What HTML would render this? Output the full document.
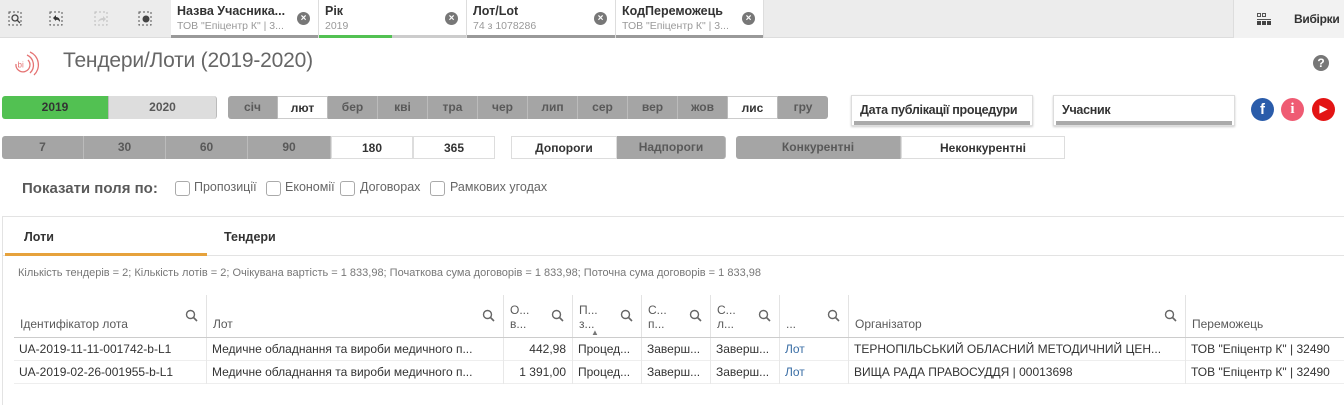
<!DOCTYPE html>
<html><head><meta charset="utf-8"><style>
*{box-sizing:border-box;margin:0;padding:0}
body{width:1344px;height:405px;overflow:hidden;background:#fff;font-family:"Liberation Sans",sans-serif;color:#595959;position:relative}
.a{position:absolute}
.tb{left:0;top:0;width:1344px;height:38px;background:#ececec;border-bottom:1px solid #ddd}
.sel{top:0;height:38px;background:#fff;border-right:1px solid #ddd}
.sel b{position:absolute;left:6px;top:4px;font-size:12.5px;color:#333;white-space:nowrap}
.sel i{position:absolute;left:6px;top:20px;font-size:10.5px;font-style:normal;color:#999;white-space:nowrap}
.sel .x{position:absolute;right:8px;top:12px;width:13px;height:13px;border-radius:50%;background:#777;color:#fff;font-size:10px;line-height:13px;text-align:center;font-weight:bold}
.sel .bar{position:absolute;left:0;right:0;bottom:0;height:3px;background:#999}
.btn{position:absolute;text-align:center;font-size:12px;font-weight:bold;color:#595959;border-right:1px solid #bbb}
.g{background:#a5a5a5}
.w{background:#fff}
.dk{top:96px;height:23px;line-height:23px}
.r2{top:136px;height:23px;line-height:23px}
.dd{top:95px;height:31px;background:#fff;border:1px solid #ddd;font-size:12.5px;font-weight:bold;color:#333;padding:7px 8px;box-shadow:0 1px 2px #ccc;white-space:nowrap;letter-spacing:-0.3px}
.dd::after{content:"";position:absolute;left:2px;right:2px;bottom:0;height:4px;background:#aaa}
.cb{top:181px;width:15px;height:15px;border:1px solid #aaa;border-radius:3px;background:#fff}
.cl{top:180px;font-size:12.5px;color:#666}
.th{position:absolute;top:295px;height:42px;border-right:1px solid #e3e3e3;font-size:12px;color:#595959}
.th span{position:absolute;left:6px;bottom:6px;white-space:nowrap}
.th svg{position:absolute;right:8px;top:14px}
.td{position:absolute;height:23px;line-height:23px;font-size:12px;color:#333;padding-left:5px;border-right:1px solid #e8e8e8;white-space:nowrap;overflow:hidden}
.cir{position:absolute;border-radius:50%;color:#fff;text-align:center;font-weight:bold}
</style></head><body>
<div class="a tb"></div>
<svg class="a" style="left:0;top:0" width="170" height="38">
<g fill="none" stroke="#555" stroke-dasharray="2,2" stroke-width="1">
<rect x="9" y="12" width="12" height="13"/><rect x="50" y="12" width="12" height="13"/><rect x="139" y="12" width="12" height="13"/></g>
<rect x="95" y="12" width="12" height="13" fill="none" stroke="#bbb" stroke-dasharray="2,2"/>
<circle cx="15" cy="18" r="3" fill="none" stroke="#444" stroke-width="1.3"/><line x1="17" y1="20" x2="20" y2="23" stroke="#444" stroke-width="1.3"/>
<path d="M53 18 L56 15 L56 17 Q60 17 60 22 Q58 19 56 20 L56 21Z" fill="#333"/>
<path d="M98 22 Q99 18 103 18 L103 16 L106 19 L103 22 L103 20 Q100 20 98 22Z" fill="#ccc"/>
<circle cx="146" cy="19" r="3.5" fill="#444"/>
</svg>
<div class="a sel" style="left:171px;width:148px"><b>Назва Учасника...</b><i>ТОВ "Епіцентр К" | 3...</i><div class="x">×</div><div class="bar"></div></div>
<div class="a sel" style="left:319px;width:148px"><b>Рік</b><i>2019</i><div class="x">×</div><div class="bar" style="background:#ccc"></div><div class="bar" style="width:73px;background:#52c152"></div></div>
<div class="a sel" style="left:467px;width:149px"><b>Лот/Lot</b><i>74 з 1078286</i><div class="x">×</div><div class="bar"></div></div>
<div class="a sel" style="left:616px;width:148px"><b>КодПереможець</b><i>ТОВ "Епіцентр К" | 3...</i><div class="x">×</div><div class="bar"></div></div>
<div class="a" style="left:1233px;top:0;width:111px;height:38px;background:#f2f2f2;border-left:1px solid #ddd"></div>
<svg class="a" style="left:1256px;top:12px" width="16" height="14"><g fill="none" stroke="#555"><rect x="1.5" y="1.5" width="3" height="3"/><rect x="6.5" y="1.5" width="3" height="3"/></g><rect x="1" y="7" width="14" height="1" fill="#555"/><rect x="1" y="9" width="4" height="4" fill="#444"/><rect x="6" y="9" width="4" height="4" fill="#444"/><rect x="11" y="9" width="4" height="4" fill="#444"/></svg>
<div class="a" style="left:1294px;top:12px;font-size:12px;font-weight:bold;color:#333;letter-spacing:-0.3px">Вибірки</div>

<svg class="a" style="left:8px;top:48px" width="32" height="30"><g fill="none" stroke="#e57373" stroke-width="1.3"><path d="M8 16 A7 7 0 1 0 20 12"/><path d="M19 7 A11 11 0 0 1 22 25"/><path d="M22 4 A14 14 0 0 1 26 27"/></g><text x="9.5" y="19.5" font-size="8" fill="#e57373" font-family="Liberation Sans">bi</text></svg>
<div class="a" style="left:63px;top:49px;font-size:21px;color:#666;letter-spacing:-0.2px">Тендери/Лоти (2019-2020)</div>
<div class="cir" style="left:1313px;top:55px;width:16px;height:16px;background:#777;font-size:12px;line-height:16px">?</div>

<div class="btn dk" style="left:2px;width:107px;background:#52c152;border-radius:3px 0 0 3px;color:#333">2019</div>
<div class="btn dk" style="left:109px;width:108px;background:#ddd;border-radius:0 3px 3px 0">2020</div>
<div class="btn dk g" style="left:228px;width:50px;border-radius:3px 0 0 3px">січ</div>
<div class="btn dk w" style="left:278px;width:50px;color:#333;border-top:1px solid #ccc;border-bottom:1px solid #ccc">лют</div>
<div class="btn dk g" style="left:328px;width:50px">бер</div>
<div class="btn dk g" style="left:378px;width:50px">кві</div>
<div class="btn dk g" style="left:428px;width:50px">тра</div>
<div class="btn dk g" style="left:478px;width:50px">чер</div>
<div class="btn dk g" style="left:528px;width:50px">лип</div>
<div class="btn dk g" style="left:578px;width:50px">сер</div>
<div class="btn dk g" style="left:628px;width:50px">вер</div>
<div class="btn dk g" style="left:678px;width:50px">жов</div>
<div class="btn dk w" style="left:728px;width:50px;color:#333;border-top:1px solid #ccc;border-bottom:1px solid #ccc">лис</div>
<div class="btn dk g" style="left:778px;width:50px;border-radius:0 3px 3px 0;border:none">гру</div>
<div class="a dd" style="left:851px;width:182px">Дата публікації процедури</div>
<div class="a dd" style="left:1053px;width:182px">Учасник</div>
<div class="cir" style="left:1251px;top:98px;width:23px;height:23px;background:#2a5caa;font-size:15px;line-height:24px">f</div>
<div class="cir" style="left:1281px;top:98px;width:23px;height:23px;background:#ef5b73;font-size:15px;line-height:23px;font-family:'Liberation Serif'">i</div>
<div class="cir" style="left:1312px;top:98px;width:23px;height:23px;background:#e31414;font-size:10px;line-height:23px">▶</div>

<div class="btn r2 g" style="left:2px;width:82px;border-radius:3px 0 0 3px">7</div>
<div class="btn r2 g" style="left:84px;width:82px">30</div>
<div class="btn r2 g" style="left:166px;width:82px">60</div>
<div class="btn r2 g" style="left:248px;width:83px">90</div>
<div class="btn r2 w" style="left:331px;width:82px;color:#333;border:1px solid #ddd">180</div>
<div class="btn r2 w" style="left:413px;width:82px;color:#333;border:1px solid #ddd">365</div>
<div class="btn r2 w" style="left:511px;width:106px;color:#333;border:1px solid #ddd">Допороги</div>
<div class="btn r2 g" style="left:617px;width:109px;border-radius:0 3px 3px 0">Надпороги</div>
<div class="btn r2 g" style="left:736px;width:165px;border-radius:3px 0 0 3px">Конкурентні</div>
<div class="btn r2 w" style="left:901px;width:164px;color:#333;border:1px solid #ddd">Неконкурентні</div>

<div class="a" style="left:22px;top:180px;font-size:15px;font-weight:bold;color:#595959">Показати поля по:</div>
<div class="a cb" style="left:175px"></div><div class="a cl" style="left:194px">Пропозиції</div>
<div class="a cb" style="left:266px"></div><div class="a cl" style="left:285px">Економії</div>
<div class="a cb" style="left:340px"></div><div class="a cl" style="left:360px">Договорах</div>
<div class="a cb" style="left:430px"></div><div class="a cl" style="left:450px">Рамкових угодах</div>

<div class="a" style="left:2px;top:216px;width:1342px;height:189px;border-left:1px solid #e3e3e3;border-top:1px solid #e3e3e3"></div>
<div class="a" style="left:24px;top:230px;font-size:12.5px;font-weight:bold;color:#333">Лоти</div>
<div class="a" style="left:224px;top:230px;font-size:12.5px;font-weight:bold;color:#333">Тендери</div>
<div class="a" style="left:3px;top:255px;width:1341px;height:1px;background:#e3e3e3"></div>
<div class="a" style="left:5px;top:253px;width:202px;height:3px;background:#e6a23c"></div>
<div class="a" style="left:18px;top:267px;font-size:11px;color:#777;white-space:nowrap">Кількість тендерів = 2; Кількість лотів = 2; Очікувана вартість = 1 833,98; Початкова сума договорів = 1 833,98; Поточна сума договорів = 1 833,98</div>

<div class="th" style="left:14px;width:193px"><span>Ідентифікатор лота</span><svg width="13" height="13"><circle cx="5.5" cy="5.5" r="4" fill="none" stroke="#666" stroke-width="1.4"/><line x1="8.5" y1="8.5" x2="12" y2="12" stroke="#666" stroke-width="1.6"/></svg></div>
<div class="th" style="left:207px;width:297px"><span>Лот</span><svg width="13" height="13"><circle cx="5.5" cy="5.5" r="4" fill="none" stroke="#666" stroke-width="1.4"/><line x1="8.5" y1="8.5" x2="12" y2="12" stroke="#666" stroke-width="1.6"/></svg></div>
<div class="th" style="left:504px;width:69px"><span>О...<br>в...</span><svg width="13" height="13"><circle cx="5.5" cy="5.5" r="4" fill="none" stroke="#666" stroke-width="1.4"/><line x1="8.5" y1="8.5" x2="12" y2="12" stroke="#666" stroke-width="1.6"/></svg></div>
<div class="th" style="left:573px;width:69px"><span>П...<br>з...</span><svg width="13" height="13"><circle cx="5.5" cy="5.5" r="4" fill="none" stroke="#666" stroke-width="1.4"/><line x1="8.5" y1="8.5" x2="12" y2="12" stroke="#666" stroke-width="1.6"/></svg><em style="position:absolute;left:18px;bottom:0;font-size:8px;font-style:normal;color:#777">▲</em></div>
<div class="th" style="left:642px;width:69px"><span>С...<br>п...</span><svg width="13" height="13"><circle cx="5.5" cy="5.5" r="4" fill="none" stroke="#666" stroke-width="1.4"/><line x1="8.5" y1="8.5" x2="12" y2="12" stroke="#666" stroke-width="1.6"/></svg></div>
<div class="th" style="left:711px;width:69px"><span>С...<br>л...</span><svg width="13" height="13"><circle cx="5.5" cy="5.5" r="4" fill="none" stroke="#666" stroke-width="1.4"/><line x1="8.5" y1="8.5" x2="12" y2="12" stroke="#666" stroke-width="1.6"/></svg></div>
<div class="th" style="left:780px;width:69px"><span>...</span><svg width="13" height="13"><circle cx="5.5" cy="5.5" r="4" fill="none" stroke="#666" stroke-width="1.4"/><line x1="8.5" y1="8.5" x2="12" y2="12" stroke="#666" stroke-width="1.6"/></svg></div>
<div class="th" style="left:849px;width:337px"><span>Організатор</span><svg width="13" height="13"><circle cx="5.5" cy="5.5" r="4" fill="none" stroke="#666" stroke-width="1.4"/><line x1="8.5" y1="8.5" x2="12" y2="12" stroke="#666" stroke-width="1.6"/></svg></div>
<div class="th" style="left:1186px;width:158px;border:none"><span>Переможець</span></div>
<div class="a" style="left:14px;top:337px;width:1330px;height:1px;background:#ccc"></div>
<div class="a" style="left:14px;top:360px;width:1330px;height:1px;background:#eee"></div>
<div class="a" style="left:14px;top:383px;width:1330px;height:1px;background:#eee"></div>

<div class="td" style="left:14px;top:338px;width:193px">UA-2019-11-11-001742-b-L1</div>
<div class="td" style="left:207px;top:338px;width:297px">Медичне обладнання та вироби медичного п...</div>
<div class="td" style="left:504px;top:338px;width:69px;text-align:right;padding-right:6px">442,98</div>
<div class="td" style="left:573px;top:338px;width:69px">Процед...</div>
<div class="td" style="left:642px;top:338px;width:69px">Заверш...</div>
<div class="td" style="left:711px;top:338px;width:69px">Заверш...</div>
<div class="td" style="left:780px;top:338px;width:69px;color:#3a6ea5">Лот</div>
<div class="td" style="left:849px;top:338px;width:337px">ТЕРНОПІЛЬСЬКИЙ ОБЛАСНИЙ МЕТОДИЧНИЙ ЦЕН...</div>
<div class="td" style="left:1186px;top:338px;width:158px;border:none">ТОВ "Епіцентр К" | 32490</div>

<div class="td" style="left:14px;top:361px;width:193px">UA-2019-02-26-001955-b-L1</div>
<div class="td" style="left:207px;top:361px;width:297px">Медичне обладнання та вироби медичного п...</div>
<div class="td" style="left:504px;top:361px;width:69px;text-align:right;padding-right:6px">1 391,00</div>
<div class="td" style="left:573px;top:361px;width:69px">Процед...</div>
<div class="td" style="left:642px;top:361px;width:69px">Заверш...</div>
<div class="td" style="left:711px;top:361px;width:69px">Заверш...</div>
<div class="td" style="left:780px;top:361px;width:69px;color:#3a6ea5">Лот</div>
<div class="td" style="left:849px;top:361px;width:337px">ВИЩА РАДА ПРАВОСУДДЯ | 00013698</div>
<div class="td" style="left:1186px;top:361px;width:158px;border:none">ТОВ "Епіцентр К" | 32490</div>
</body></html>
